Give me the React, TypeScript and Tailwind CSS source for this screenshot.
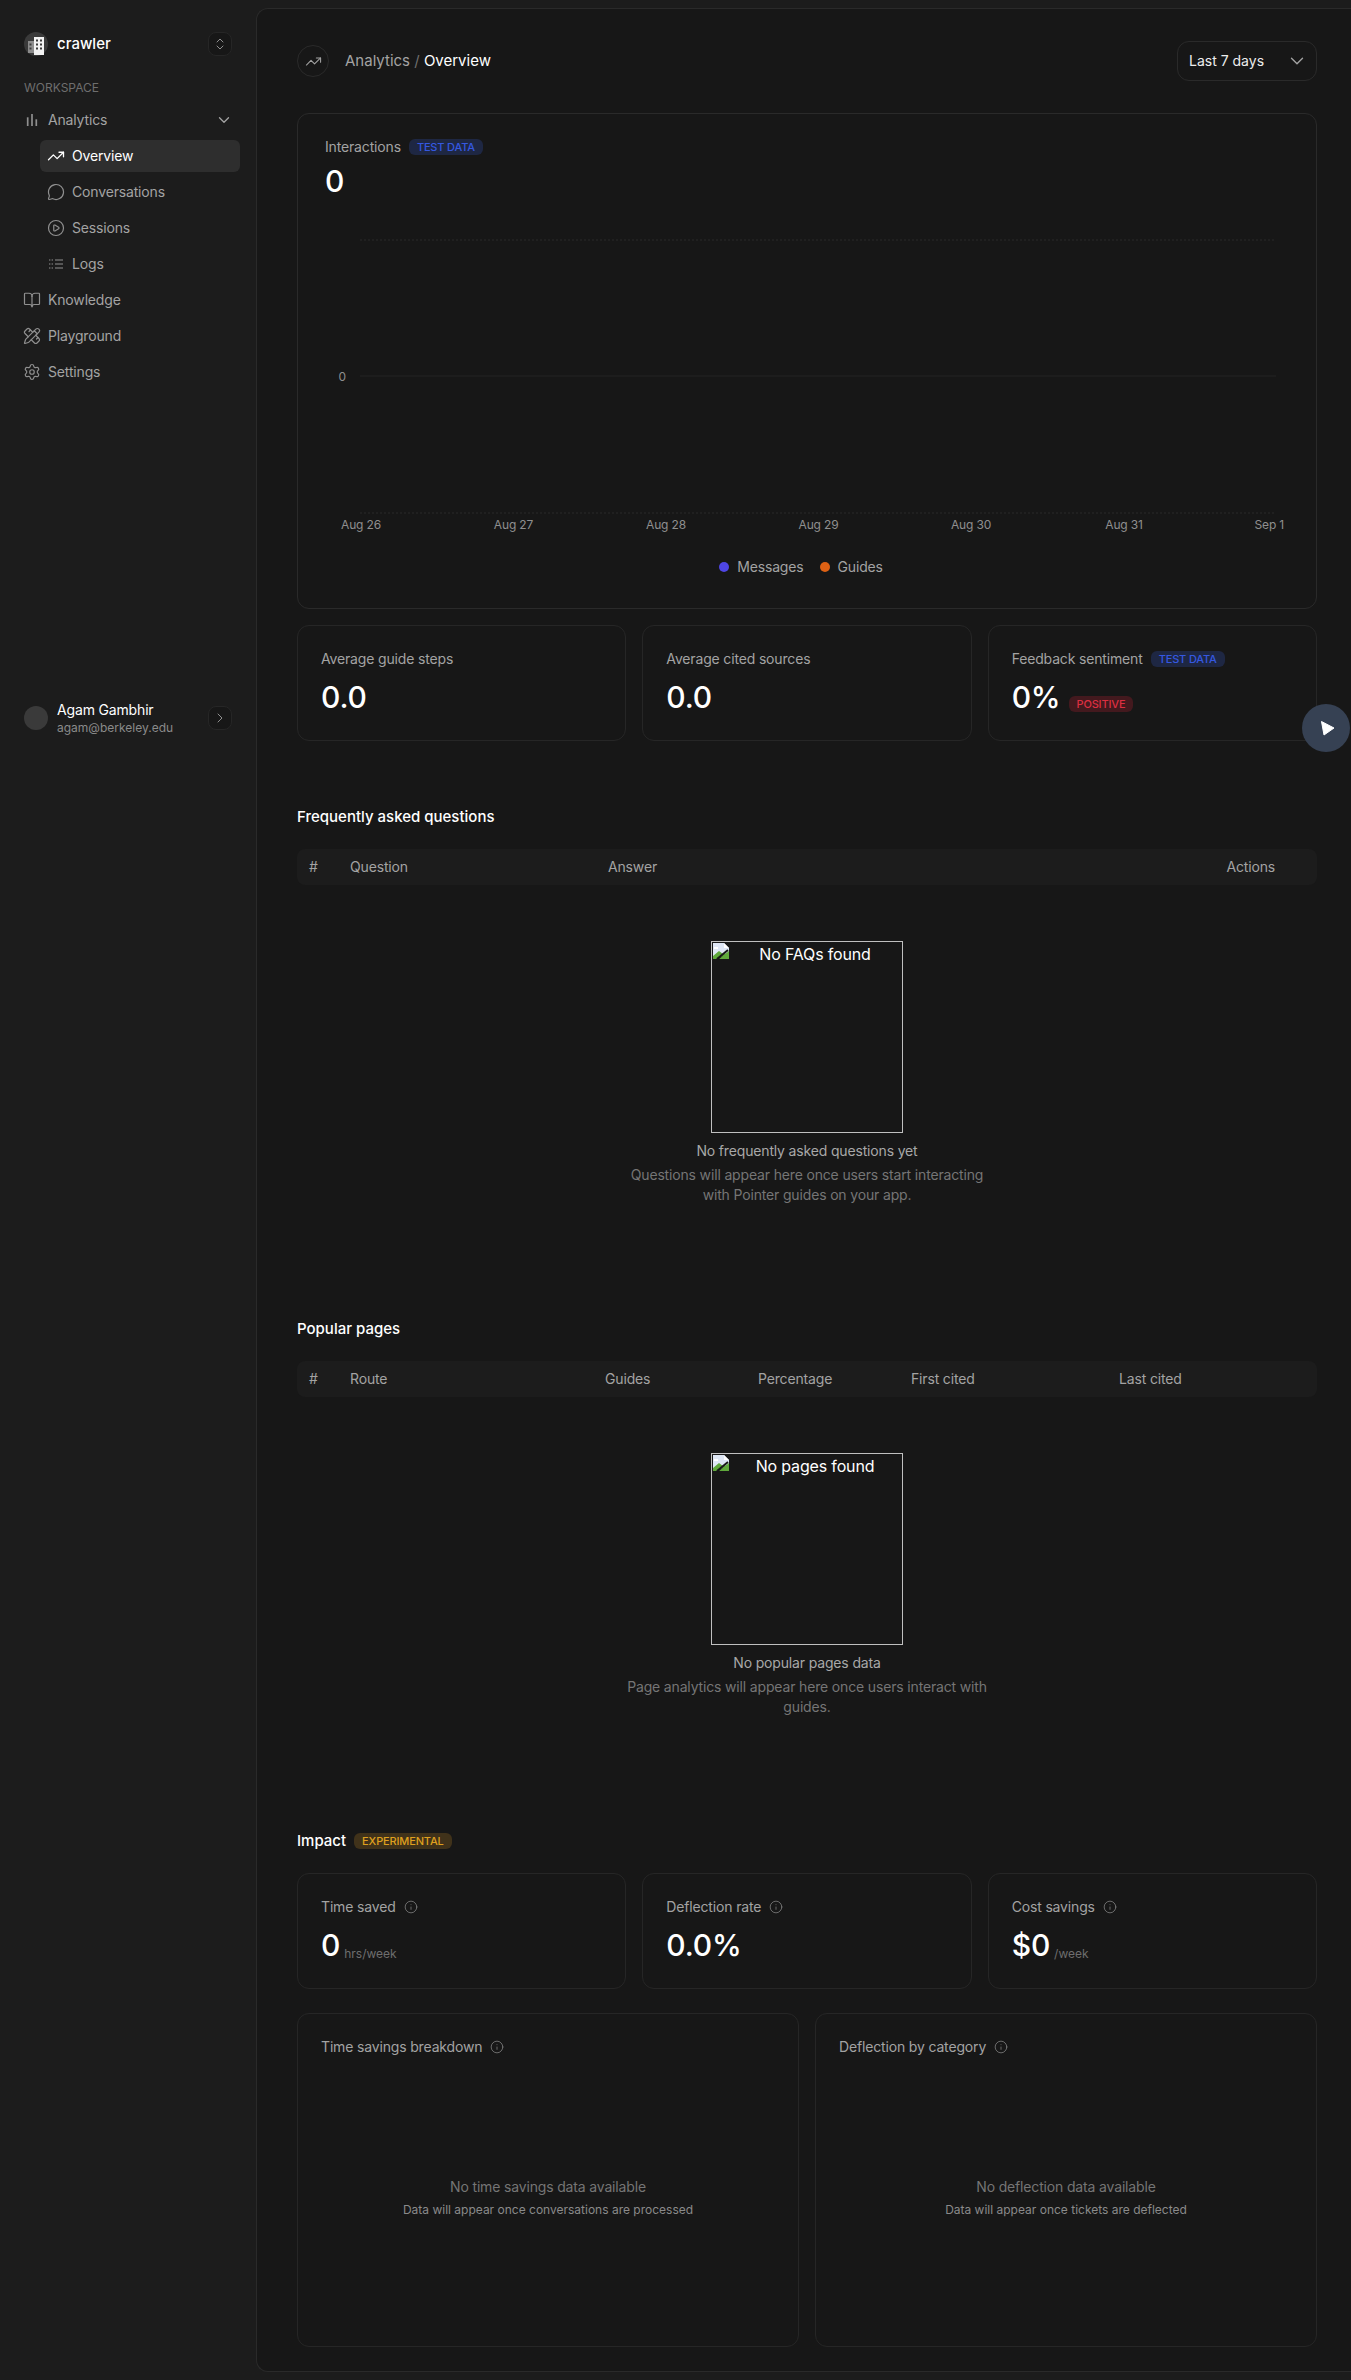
import React from "react";
import {
  ChevronDown,
  ChevronRight,
  CirclePlay,
  MessageCircle,
  PencilRuler,
  Settings,
  BookOpen,
  TrendingUp,
  Info,
} from "lucide-react";

function LogoBuilding() {
  return (
    <svg viewBox="0 0 24 24" className="w-6 h-6">
      <circle cx="12" cy="12" r="12" fill="#3a3a3a" />
      <rect x="4" y="9" width="6" height="12" fill="#8c8c8c" />
      <rect x="10" y="5" width="10" height="18" fill="#f2f2f2" />
      <g fill="#3a3a3a">
        <rect x="12" y="7.5" width="2" height="2" />
        <rect x="16" y="7.5" width="2" height="2" />
        <rect x="12" y="11.5" width="2" height="2" />
        <rect x="16" y="11.5" width="2" height="2" />
        <rect x="12" y="15.5" width="2" height="2" />
        <rect x="16" y="15.5" width="2" height="2" />
        <rect x="5.5" y="11.5" width="2" height="2" />
        <rect x="5.5" y="15.5" width="2" height="2" />
      </g>
    </svg>
  );
}

function Stepper() {
  return (
    <svg viewBox="0 0 16 16" className="w-4 h-4" fill="none" stroke="#8f8f8f" strokeWidth="1" strokeLinecap="round" strokeLinejoin="round">
      <path d="M5 6 8 3l3 3" />
      <path d="M5 10l3 3 3-3" />
    </svg>
  );
}

function BarsIcon() {
  return (
    <svg viewBox="0 0 16 16" className="w-4 h-4" fill="none" stroke="#8f8f8f" strokeWidth="1.7">
      <path d="M3.7 14V5.3" />
      <path d="M8 14V2" />
      <path d="M12.3 14V7.3" />
    </svg>
  );
}

function LogsIcon() {
  return (
    <svg viewBox="0 0 16 16" className="w-4 h-4" fill="none" stroke="#8f8f8f" strokeWidth="1.2">
      <path d="M1 4h1.4M3.6 4H5M7 4h8" />
      <path d="M1 8h1.4M3.6 8H5M7 8h8" />
      <path d="M1 12h1.4M3.6 12H5M7 12h8" />
    </svg>
  );
}

function BrokenImage() {
  return (
    <svg viewBox="0 0 16 16" className="w-4 h-4 shrink-0">
      <path d="M0 0h11l5 5v5L0 16z" fill="#dfe7f5" />
      <path d="M11 0l5 5h-5z" fill="#ffffff" />
      <path d="M0 13l6-5 4 3 6-1v1L3 16H0z" fill="#5fa83b" />
      <path d="M16 8v8H6z" fill="#5fa83b" />
      <path d="M15 7 4 16" stroke="#171717" strokeWidth="2" />
      <path d="M1 4h4v2H1z" fill="#ffffff" />
    </svg>
  );
}

function Badge({ tone, children }: { tone: "blue" | "red" | "amber"; children: React.ReactNode }) {
  const cls =
    tone === "blue"
      ? "bg-[#1e2743] text-[#3558e0]"
      : tone === "red"
        ? "bg-[#43191e] text-[#dc2f41]"
        : "bg-[#40321a] text-[#dfa01e]";
  return (
    <span className={`inline-flex items-center h-4 px-2 rounded-md text-[11px] leading-4 font-medium ${cls}`}>{children}</span>
  );
}

function NavRow({ icon, label, active, sub }: { icon: React.ReactNode; label: string; active?: boolean; sub?: boolean }) {
  return (
    <div
      className={`flex items-center gap-2 h-8 rounded-md text-sm ${sub ? "ml-4 px-2" : ""} ${
        active ? "bg-[#2e2e2e] text-white" : "text-[#a3a3a3]"
      }`}
    >
      <span className="w-4 h-4 flex items-center justify-center shrink-0">{icon}</span>
      <span>{label}</span>
    </div>
  );
}

const ic = "w-[18px] h-[18px] shrink-0 text-[#8f8f8f]";

function Sidebar() {
  return (
    <aside className="w-64 h-[768px] shrink-0 flex flex-col justify-between px-6 pt-8 pb-8">
      <div>
        <div className="flex items-center justify-between">
          <div className="flex items-center gap-[9px]">
            <LogoBuilding />
            <span className="text-[15px] tracking-normal text-white font-[450]">crawler</span>
          </div>
          <button className="w-6 h-6 rounded-lg bg-[#171717] border border-[#262626] flex items-center justify-center">
            <Stepper />
          </button>
        </div>
        <div className="mt-6 h-4 text-xs leading-4 tracking-normal text-[#6e6e6e]">WORKSPACE</div>
        <div className="mt-2 flex flex-col gap-1 -mr-2">
          <div className="flex items-center justify-between pr-[7px] h-8 text-sm text-[#a3a3a3]">
            <div className="flex items-center gap-2">
              <BarsIcon />
              <span>Analytics</span>
            </div>
            <ChevronDown className="w-[18px] h-[18px] text-[#a3a3a3]" strokeWidth={1.75} />
          </div>
          <NavRow sub active label="Overview" icon={<TrendingUp className="w-[18px] h-[18px] shrink-0 text-white" strokeWidth={1.75} />} />
          <NavRow sub label="Conversations" icon={<MessageCircle className={ic} strokeWidth={1.6} />} />
          <NavRow sub label="Sessions" icon={<CirclePlay className={ic} strokeWidth={1.6} />} />
          <NavRow sub label="Logs" icon={<LogsIcon />} />
          <NavRow label="Knowledge" icon={<BookOpen className={ic} strokeWidth={1.6} />} />
          <NavRow label="Playground" icon={<PencilRuler className={ic} strokeWidth={1.6} />} />
          <NavRow label="Settings" icon={<Settings className={ic} strokeWidth={1.6} />} />
        </div>
      </div>
      <div className="flex items-center justify-between">
        <div className="flex items-center gap-[9px]">
          <div className="w-6 h-6 rounded-full bg-[#3a3a3a]" />
          <div className="flex flex-col">
            <span className="text-sm leading-5 text-white">Agam Gambhir</span>
            <span className="text-xs leading-4 tracking-normal text-[#8a8a8a]">agam@berkeley.edu</span>
          </div>
        </div>
        <button className="w-6 h-6 rounded-lg bg-[#171717] border border-[#262626] flex items-center justify-center">
          <ChevronRight className="w-4 h-4 text-[#8f8f8f]" strokeWidth={1.5} />
        </button>
      </div>
    </aside>
  );
}

function Chart() {
  const ticks = [
    ["Aug 26", 361],
    ["Aug 27", 513.5],
    ["Aug 28", 666],
    ["Aug 29", 818.5],
    ["Aug 30", 971],
    ["Aug 31", 1124],
  ] as const;
  return (
    <svg width="1018" height="318" className="block mt-[23px]" style={{ fontFamily: "Inter, sans-serif" }}>
      <line x1="62" x2="978" y1="18" y2="18" stroke="#2b2b2b" strokeDasharray="2 2" />
      <line x1="62" x2="978" y1="154" y2="154" stroke="#242424" />
      <line x1="62" x2="978" y1="291" y2="291" stroke="#2b2b2b" strokeDasharray="2 2" />
      <text x="48" y="159" textAnchor="end" fontSize="12" fill="#8f8f8f">0</text>
      {ticks.map(([t, x]) => (
        <text key={t} x={x - 298} y="307" textAnchor="middle" fontSize="12" fill="#8f8f8f">{t}</text>
      ))}
      <text x="986" y="307" textAnchor="end" fontSize="12" fill="#8f8f8f">Sep 1</text>
    </svg>
  );
}

function Legend() {
  return (
    <div className="flex justify-center items-center gap-4 pr-3 text-sm leading-5 text-[#a3a3a3]">
      <span className="flex items-center gap-2">
        <span className="w-[10px] h-[10px] rounded-full bg-[#4f46e5]" />
        Messages
      </span>
      <span className="flex items-center gap-2">
        <span className="w-[10px] h-[10px] rounded-full bg-[#dd6114]" />
        Guides
      </span>
    </div>
  );
}

function StatCard({ label, value, badge, extra, info, unit }: { label: string; value: string; badge?: boolean; extra?: React.ReactNode; info?: boolean; unit?: string }) {
  return (
    <div className="h-[116px] rounded-xl border border-[#262626] px-[23px] pt-[23px]">
      <div className="flex items-center gap-2 h-5 text-sm text-[#a3a3a3]">
        <span>{label}</span>
        {badge && <Badge tone="blue">TEST DATA</Badge>}
        {info && <Info className="w-[14px] h-[14px] text-[#8a8a8a]" strokeWidth={1.25} />}
      </div>
      <div className="mt-[10px] flex items-end gap-2 h-9">
        <span className="text-3xl leading-9 text-white font-medium">{value}</span>
        {unit && <span className="text-xs leading-4 tracking-normal text-[#6e6e6e] -ml-1 mb-[1px]">{unit}</span>}
        {extra && <span className="mb-[1px]">{extra}</span>}
      </div>
    </div>
  );
}

function EmptyState({ alt, title, lines }: { alt: string; title: string; lines: string[] }) {
  return (
    <div className="flex flex-col items-center pt-14">
      <div className="w-48 h-48 border border-[#c0c0c0] p-[1px] flex items-start text-white text-base leading-6">
        <BrokenImage />
        <span className="flex-1 text-center -mt-[1px]">{alt}</span>
      </div>
      <div className="mt-2 text-sm leading-5 text-[#a8a8a8]">{title}</div>
      <div className="mt-1 text-sm leading-5 text-[#757575] text-center w-[380px]">
        {lines.map((l) => (
          <div key={l}>{l}</div>
        ))}
      </div>
    </div>
  );
}

function TableHead({ cols }: { cols: [string, string][] }) {
  return (
    <div className="mt-5 h-9 rounded-lg bg-[#1c1c1c] flex items-center text-sm text-[#a3a3a3]">
      {cols.map(([c, w]) => (
        <div key={c} className={w}>
          {c}
        </div>
      ))}
    </div>
  );
}

function ChartCard({ title, empty, sub }: { title: string; empty: string; sub: string }) {
  return (
    <div className="h-[334px] rounded-xl border border-[#262626] px-[23px] pt-[23px] flex flex-col">
      <div className="flex items-center gap-2 h-5 text-sm text-[#a3a3a3]">
        <span>{title}</span>
        <Info className="w-[14px] h-[14px] text-[#8a8a8a]" strokeWidth={1.25} />
      </div>
      <div className="mt-[120px] text-center">
        <div className="text-sm leading-5 text-[#757575]">{empty}</div>
        <div className="mt-[5px] text-xs leading-4 tracking-normal text-[#8a8a8a]">{sub}</div>
      </div>
    </div>
  );
}

const headingCls = "h-6 text-[15px] leading-6 tracking-normal text-white font-[450]";

export default function App() {
  return (
    <div
      className="relative w-[1351px] h-[2380px] bg-[#1c1c1c] flex overflow-hidden tracking-[-0.01em]"
      style={{ fontFamily: "Inter, 'Noto Sans', sans-serif" }}
    >
      <Sidebar />
      <main className="flex-1 mt-2 h-[2364px] bg-[#171717] border border-r-0 border-[#2a2a2a] rounded-l-xl pl-10 pr-[34px] pt-8">
        <header className="flex items-center justify-between h-10">
          <div className="flex items-center gap-4">
            <div className="w-8 h-8 rounded-full border border-[#2a2a2a] flex items-center justify-center">
              <TrendingUp className="w-[17px] h-[17px] text-[#a3a3a3]" strokeWidth={1.5} />
            </div>
            <div className="text-[15px] tracking-normal">
              <span className="text-[#a3a3a3]">Analytics</span>
              <span className="text-[#6e6e6e]"> / </span>
              <span className="text-white">Overview</span>
            </div>
          </div>
          <div className="w-[140px] h-10 rounded-xl border border-[#2a2a2a] flex items-center justify-between pl-[11px] pr-[8px] text-sm tracking-normal text-[#ededed]">
            <span>Last 7 days</span>
            <ChevronDown className="w-[22px] h-[22px] text-[#a3a3a3]" strokeWidth={1.5} />
          </div>
        </header>

        <section className="mt-[32px] h-[496px] rounded-xl border border-[#2a2a2a] pt-[23px]">
          <div className="px-[27px]">
            <div className="flex items-center gap-2 h-5 text-sm text-[#a3a3a3]">
              <span>Interactions</span>
              <Badge tone="blue">TEST DATA</Badge>
            </div>
            <div className="mt-[6px] text-3xl leading-9 text-white font-medium">0</div>
          </div>
          <Chart />
          <div className="mt-[17px]">
            <Legend />
          </div>
        </section>

        <div className="mt-4 grid grid-cols-3 gap-4">
          <StatCard label="Average guide steps" value="0.0" />
          <StatCard label="Average cited sources" value="0.0" />
          <StatCard
            label="Feedback sentiment"
            badge
            value="0%"
            extra={<Badge tone="red">POSITIVE</Badge>}
          />
        </div>

        <h2 className={`mt-[64px] ${headingCls}`}>Frequently asked questions</h2>
        <TableHead
          cols={[
            ["#", "w-[53px] pl-3"],
            ["Question", "w-[258px]"],
            ["Answer", "flex-1"],
            ["Actions", "pr-[42px]"],
          ]}
        />
        <EmptyState
          alt="No FAQs found"
          title="No frequently asked questions yet"
          lines={["Questions will appear here once users start interacting", "with Pointer guides on your app."]}
        />

        <h2 className={`mt-[112px] ${headingCls}`}>Popular pages</h2>
        <TableHead
          cols={[
            ["#", "w-[53px] pl-3"],
            ["Route", "w-[255px]"],
            ["Guides", "w-[153px]"],
            ["Percentage", "w-[153px]"],
            ["First cited", "w-[208px]"],
            ["Last cited", "flex-1"],
          ]}
        />
        <EmptyState
          alt="No pages found"
          title="No popular pages data"
          lines={["Page analytics will appear here once users interact with", "guides."]}
        />

        <div className="mt-[112px] h-6 flex items-center gap-2">
          <h2 className={headingCls}>Impact</h2>
          <Badge tone="amber">EXPERIMENTAL</Badge>
        </div>
        <div className="mt-5 grid grid-cols-3 gap-4">
          <StatCard label="Time saved" value="0" info unit="hrs/week" />
          <StatCard label="Deflection rate" value="0.0%" info />
          <StatCard label="Cost savings" value="$0" info unit="/week" />
        </div>
        <div className="mt-6 grid grid-cols-2 gap-4">
          <ChartCard title="Time savings breakdown" empty="No time savings data available" sub="Data will appear once conversations are processed" />
          <ChartCard title="Deflection by category" empty="No deflection data available" sub="Data will appear once tickets are deflected" />
        </div>
      </main>
      <button className="absolute right-[1px] top-[704px] w-12 h-12 rounded-full bg-[#364153] flex items-center justify-center">
        <svg viewBox="0 0 16 16" className="w-4 h-4 ml-[1px]">
          <path d="M2.5 1.5 15 8 5 15z" fill="#ffffff" stroke="#ffffff" strokeLinejoin="round" />
        </svg>
      </button>
    </div>
  );
}
